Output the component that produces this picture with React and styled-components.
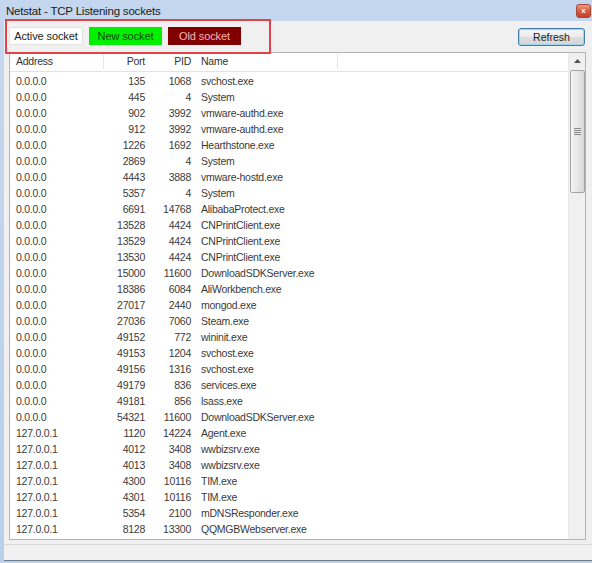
import React from "react";
import styled, { createGlobalStyle } from "styled-components";

const Global = createGlobalStyle`
  html, body { margin: 0; padding: 0; width: 592px; height: 563px; overflow: hidden; background: #f0f0f0; }
  * { box-sizing: border-box; }
`;

const rows = [
  ["0.0.0.0", 135, 1068, "svchost.exe"],
  ["0.0.0.0", 445, 4, "System"],
  ["0.0.0.0", 902, 3992, "vmware-authd.exe"],
  ["0.0.0.0", 912, 3992, "vmware-authd.exe"],
  ["0.0.0.0", 1226, 1692, "Hearthstone.exe"],
  ["0.0.0.0", 2869, 4, "System"],
  ["0.0.0.0", 4443, 3888, "vmware-hostd.exe"],
  ["0.0.0.0", 5357, 4, "System"],
  ["0.0.0.0", 6691, 14768, "AlibabaProtect.exe"],
  ["0.0.0.0", 13528, 4424, "CNPrintClient.exe"],
  ["0.0.0.0", 13529, 4424, "CNPrintClient.exe"],
  ["0.0.0.0", 13530, 4424, "CNPrintClient.exe"],
  ["0.0.0.0", 15000, 11600, "DownloadSDKServer.exe"],
  ["0.0.0.0", 18386, 6084, "AliWorkbench.exe"],
  ["0.0.0.0", 27017, 2440, "mongod.exe"],
  ["0.0.0.0", 27036, 7060, "Steam.exe"],
  ["0.0.0.0", 49152, 772, "wininit.exe"],
  ["0.0.0.0", 49153, 1204, "svchost.exe"],
  ["0.0.0.0", 49156, 1316, "svchost.exe"],
  ["0.0.0.0", 49179, 836, "services.exe"],
  ["0.0.0.0", 49181, 856, "lsass.exe"],
  ["0.0.0.0", 54321, 11600, "DownloadSDKServer.exe"],
  ["127.0.0.1", 1120, 14224, "Agent.exe"],
  ["127.0.0.1", 4012, 3408, "wwbizsrv.exe"],
  ["127.0.0.1", 4013, 3408, "wwbizsrv.exe"],
  ["127.0.0.1", 4300, 10116, "TIM.exe"],
  ["127.0.0.1", 4301, 10116, "TIM.exe"],
  ["127.0.0.1", 5354, 2100, "mDNSResponder.exe"],
  ["127.0.0.1", 8128, 13300, "QQMGBWebserver.exe"],
];

const Window = styled.div`
  position: relative;
  width: 592px;
  height: 563px;
  display: flex;
  flex-direction: column;
  background: linear-gradient(180deg, #c4d7ee 0%, #b9cfea 100%);
  font-family: "Liberation Sans", Arial, sans-serif;
`;

const TitleBar = styled.div`
  height: 21px;
  flex: none;
  display: flex;
  align-items: center;
  justify-content: space-between;
  padding: 1px 1px 0 6px;
`;

const Title = styled.div`
  font-family: "Liberation Sans", Arial, sans-serif;
  font-size: 11.5px;
  color: #1a1a1a;
  letter-spacing: -0.2px;
`;

const CloseBtn = styled.div`
  width: 15px;
  height: 14px;
  border-radius: 3px;
  background: linear-gradient(180deg, #ef9a82 0%, #d9553a 55%, #c8402a 100%);
  border: 1px solid #a8463a;
  color: #fff;
  font-size: 8px;
  font-weight: bold;
  display: flex;
  align-items: center;
  justify-content: center;
  line-height: 1;
`;

const Client = styled.div`
  flex: 1;
  margin: 0 0 2px 4px;
  background: #f0f0f0;
  border-bottom: 1px solid #6f7a86;
  display: flex;
  flex-direction: column;
  padding: 6px 6px 0 5px;
`;

const Toolbar = styled.div`
  height: 18px;
  display: flex;
  align-items: center;
  gap: 6px;
`;

const Legend = styled.div`
  height: 18px;
  width: ${(p) => p.$w}px;
  display: flex;
  align-items: center;
  justify-content: center;
  font-size: 11px;
  letter-spacing: -0.1px;
  background: ${(p) => p.$bg};
  color: ${(p) => p.$fg};
  border: 1px solid ${(p) => p.$border};
`;

const Spacer = styled.div`
  flex: 1;
`;

const RefreshButton = styled.button`
  width: 67px;
  height: 18px;
  margin-top: 2px;
  margin-right: 1px;
  font-family: "Liberation Sans", Arial, sans-serif;
  font-size: 10.5px;
  color: #222;
  border: 1px solid #3c7fb1;
  border-radius: 3px;
  background: linear-gradient(180deg, #f6f6f6 0%, #ebebeb 50%, #dcdcdc 51%, #d6d6d6 100%);
  box-shadow: inset 0 0 0 1px #9fd4ef;
  padding: 0;
`;

const List = styled.div`
  margin-top: 7px;
  height: 488px;
  background: #fff;
  border: 1px solid #b4b4b4;
  display: flex;
  overflow: hidden;
`;

const ListBody = styled.div`
  flex: 1;
  display: flex;
  flex-direction: column;
`;

const Grid = styled.div`
  display: grid;
  grid-template-columns: 94px 45px 46px 143px 1fr;
  height: ${(p) => p.$h}px;
  align-items: center;
  font-size: 10.5px;
  letter-spacing: -0.25px;
  color: #3a3a3a;
`;

const HeaderRow = styled(Grid)`
  border-bottom: 1px solid #e2e2e2;
  margin-bottom: 1px;
  color: #333;
  padding-bottom: 2px;
`;

const Cell = styled.div`
  height: 100%;
  display: flex;
  align-items: center;
  justify-content: ${(p) => (p.$right ? "flex-end" : "flex-start")};
  padding: ${(p) => (p.$right ? "0 4px 0 0" : "0 0 0 6px")};
  white-space: nowrap;
  border-right: ${(p) => (p.$sep ? "1px solid #e6e6e6" : "none")};
`;

const Scrollbar = styled.div`
  width: 17px;
  flex: none;
  background: #f0f0f0;
  border-left: 1px solid #e8e8e8;
  display: flex;
  flex-direction: column;
  align-items: center;
`;

const Arrow = styled.div`
  height: 16px;
  width: 100%;
  display: flex;
  align-items: center;
  justify-content: center;
`;

const Thumb = styled.div`
  width: 15px;
  height: 123px;
  margin-top: 1px;
  border: 1px solid #a4a4a4;
  border-radius: 2px;
  background: linear-gradient(90deg, #f4f4f4 0%, #e6e6e6 50%, #d8d8d8 100%);
  display: flex;
  align-items: center;
  justify-content: center;
`;

const Grip = styled.div`
  width: 7px;
  height: 7px;
  background: repeating-linear-gradient(180deg, #8a8a8a 0 1px, #e8e8e8 1px 2px);
`;

const StatusBar = styled.div`
  flex: 1;
  margin: 4px -6px 0 -5px;
  background: #f0f0f0;
  border-top: 1px solid #dadada;
`;

const Annotation = styled.div`
  position: absolute;
  left: 5px;
  top: 19px;
  width: 266px;
  height: 35px;
  border: 2px solid #e2424a;
  pointer-events: none;
`;

export default function App() {
  return (
    <>
      <Global />
      <Window>
        <TitleBar>
          <Title>Netstat - TCP Listening sockets</Title>
          <CloseBtn>x</CloseBtn>
        </TitleBar>
        <Client>
          <Toolbar>
            <Legend $w={74} $bg="#ffffff" $fg="#222" $border="#e2e2e2">Active socket</Legend>
            <Legend $w={73} $bg="#00f000" $fg="#0d4a0d" $border="#00f000">New socket</Legend>
            <Legend $w={73} $bg="#800000" $fg="#f2b8b8" $border="#800000">Old socket</Legend>
            <Spacer />
            <RefreshButton>Refresh</RefreshButton>
          </Toolbar>
          <List>
            <ListBody>
              <HeaderRow $h={19}>
                <Cell $sep>Address</Cell>
                <Cell $right>Port</Cell>
                <Cell $right>PID</Cell>
                <Cell $sep>Name</Cell>
                <Cell />
              </HeaderRow>
              {rows.map((r, i) => (
                <Grid key={i} $h={16}>
                  <Cell>{r[0]}</Cell>
                  <Cell $right>{r[1]}</Cell>
                  <Cell $right>{r[2]}</Cell>
                  <Cell>{r[3]}</Cell>
                  <Cell />
                </Grid>
              ))}
            </ListBody>
            <Scrollbar>
              <Arrow>
                <svg width="7" height="4" viewBox="0 0 7 4">
                  <path d="M0 4 L3.5 0 L7 4 Z" fill="#555" />
                </svg>
              </Arrow>
              <Thumb>
                <Grip />
              </Thumb>
            </Scrollbar>
          </List>
          <StatusBar />
        </Client>
        <Annotation />
      </Window>
    </>
  );
}
